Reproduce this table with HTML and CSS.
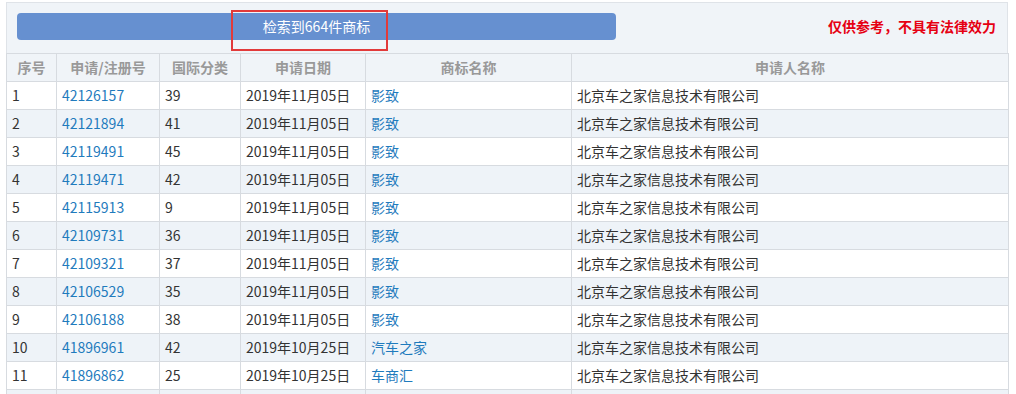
FILE: index.html
```html
<!DOCTYPE html>
<html lang="zh">
<head>
<meta charset="utf-8">
<link rel="stylesheet" href="styles.css">
</head>
<body>
<div class="panel">
  <div class="topbar">
    <div class="countbar">检索到664件商标</div>
    <div class="disclaimer">仅供参考，不具有法律效力</div>
    <div class="mark"></div>
  </div>
  <table class="grid">
    <colgroup>
      <col class="c1"><col class="c2"><col class="c3"><col class="c4"><col class="c5"><col class="c6">
    </colgroup>
    <thead>
      <tr><th>序号</th><th>申请/注册号</th><th>国际分类</th><th>申请日期</th><th>商标名称</th><th>申请人名称</th></tr>
    </thead>
    <tbody>
      <tr><td>1</td><td class="lnk">42126157</td><td>39</td><td>2019年11月05日</td><td class="lnk">影致</td><td>北京车之家信息技术有限公司</td></tr>
      <tr><td>2</td><td class="lnk">42121894</td><td>41</td><td>2019年11月05日</td><td class="lnk">影致</td><td>北京车之家信息技术有限公司</td></tr>
      <tr><td>3</td><td class="lnk">42119491</td><td>45</td><td>2019年11月05日</td><td class="lnk">影致</td><td>北京车之家信息技术有限公司</td></tr>
      <tr><td>4</td><td class="lnk">42119471</td><td>42</td><td>2019年11月05日</td><td class="lnk">影致</td><td>北京车之家信息技术有限公司</td></tr>
      <tr><td>5</td><td class="lnk">42115913</td><td>9</td><td>2019年11月05日</td><td class="lnk">影致</td><td>北京车之家信息技术有限公司</td></tr>
      <tr><td>6</td><td class="lnk">42109731</td><td>36</td><td>2019年11月05日</td><td class="lnk">影致</td><td>北京车之家信息技术有限公司</td></tr>
      <tr><td>7</td><td class="lnk">42109321</td><td>37</td><td>2019年11月05日</td><td class="lnk">影致</td><td>北京车之家信息技术有限公司</td></tr>
      <tr><td>8</td><td class="lnk">42106529</td><td>35</td><td>2019年11月05日</td><td class="lnk">影致</td><td>北京车之家信息技术有限公司</td></tr>
      <tr><td>9</td><td class="lnk">42106188</td><td>38</td><td>2019年11月05日</td><td class="lnk">影致</td><td>北京车之家信息技术有限公司</td></tr>
      <tr><td>10</td><td class="lnk">41896961</td><td>42</td><td>2019年10月25日</td><td class="lnk">汽车之家</td><td>北京车之家信息技术有限公司</td></tr>
      <tr><td>11</td><td class="lnk">41896862</td><td>25</td><td>2019年10月25日</td><td class="lnk">车商汇</td><td>北京车之家信息技术有限公司</td></tr>
      <tr><td></td><td></td><td></td><td></td><td></td><td></td></tr>
    </tbody>
  </table>
</div>
</body>
</html>
```

FILE: styles.css
```css
html, body {
  margin: 0;
  padding: 0;
  background: #ffffff;
  overflow: hidden;
}
body {
  font-family: "Noto Sans CJK SC", "Microsoft YaHei", sans-serif;
  font-size: 14px;
  color: #333333;
}
.panel {
  margin: 2px 0 0 6px;
  width: 1002px;
  border-top: 1px solid #dfe3e8;
}
.topbar {
  position: relative;
  height: 50px;
  background: #f0f4f8;
  border-left: 1px solid #dfe3e8;
  border-right: 1px solid #dfe3e8;
  display: flex;
  align-items: flex-start;
  box-sizing: border-box;
  padding: 10px 10px 0 10px;
}
.countbar {
  width: 599px;
  height: 27px;
  background: #6690d0;
  border-radius: 4px;
  color: #ffffff;
  line-height: 27px;
  text-align: center;
  font-size: 14px;
}
.disclaimer {
  margin-left: auto;
  color: #e60012;
  font-weight: bold;
  font-size: 14px;
  line-height: 27px;
  padding-right: 1px;
}
.mark {
  position: absolute;
  left: 224px;
  top: 7px;
  width: 153px;
  height: 37px;
  border: 2px solid #e23a3a;
}
.grid {
  border-collapse: collapse;
  table-layout: fixed;
  width: 1002px;
}
.c1 { width: 50px; }
.c2 { width: 103px; }
.c3 { width: 81px; }
.c4 { width: 125px; }
.c5 { width: 206px; }
.c6 { width: 437px; }
.grid th, .grid td {
  border: 1px solid #d7dbe0;
  height: 28px;
  padding: 0 5px;
  line-height: 27px;
  white-space: nowrap;
  overflow: hidden;
  box-sizing: border-box;
}
.grid th {
  background: #f0f4f8;
  color: #999999;
  font-weight: bold;
  text-align: center;
}
.grid td {
  text-align: left;
}
.grid tbody tr:nth-child(even) td {
  background: #eef3f8;
}
.grid td.lnk {
  color: #1f7bbd;
}
```
